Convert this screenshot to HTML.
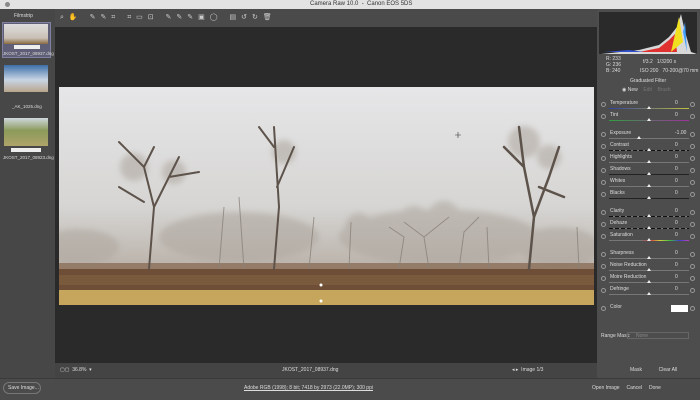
<!DOCTYPE html><html><head><style>
*{margin:0;padding:0;box-sizing:border-box}
body{width:700px;height:400px;overflow:hidden;background:#4b4b4b;font-family:"Liberation Sans",sans-serif;position:relative;color:#ddd}
.a{position:absolute}
.t{font-size:5px;color:#ddd;white-space:nowrap}
.row{position:absolute;left:597px;width:103px;height:12px}
.row .c{position:absolute;left:4px;top:2px;width:5px;height:5px;border:1px solid #999;border-radius:50%}
.row .c2{left:93px}
.row .l{position:absolute;left:13px;top:0;font-size:5px}
.row .v{position:absolute;left:78px;top:0;font-size:5px}
.row .s{position:absolute;left:12px;top:8px;width:80px;height:1px;background:#777}
.row .k{position:absolute;top:6px;width:0;height:0;border-left:2px solid transparent;border-right:2px solid transparent;border-bottom:3px solid #eee}
</style></head><body>
<div class="a" style="left:0;top:0;width:700px;height:9px;background:#e2e2e2"></div>
<div class="a" style="left:5px;top:2px;width:5px;height:5px;border-radius:50%;background:#888"></div>
<div class="a t" style="left:310px;top:1px;color:#333;font-size:6px">Camera Raw 10.0 &nbsp;-&nbsp; Canon EOS 5DS</div>
<div class="a" style="left:0;top:9px;width:55px;height:369px;background:#474747"></div>
<div class="a t" style="left:14px;top:13px">Filmstrip</div>
<div class="a" style="left:2px;top:22px;width:49px;height:36px;background:#5e5e76;border:1px solid #8080a0"></div>
<div class="a" style="left:4px;top:24px;width:44px;height:20px;background:linear-gradient(#ddd,#c9c0b5 70%,#8a6a40)"></div>
<div class="a" style="left:14px;top:45px;width:26px;height:4px;background:#eee"></div>
<div class="a t" style="left:3px;top:51px;font-size:4.5px">JKOST_2017_08937.dng</div>
<div class="a" style="left:4px;top:65px;width:44px;height:27px;background:linear-gradient(#3d6fa8,#c8d4e4 55%,#b8a58c)"></div>
<div class="a t" style="left:12px;top:104px;font-size:4.5px">_AK_1025.dng</div>
<div class="a" style="left:4px;top:118px;width:44px;height:28px;background:linear-gradient(#cfd7dd,#8b9a5a 45%,#b0a46a)"></div>
<div class="a" style="left:11px;top:148px;width:30px;height:4px;background:#eee"></div>
<div class="a t" style="left:3px;top:155px;font-size:4.5px">JKOST_2017_08923.dng</div>
<div class="a" style="left:55px;top:9px;width:542px;height:18px;background:#4a4a4a"></div>
<div class="a t" style="left:60px;top:13px;font-size:7px;letter-spacing:5px;color:#ccc">⌕✋ ✎✎⌗ ⌗▭⊡ ✎✎✎▣◯ ▤↺↻🗑</div>
<div class="a" style="left:55px;top:27px;width:542px;height:336px;background:#2a2a2a"></div>
<svg class="a" style="left:59px;top:87px" width="535" height="218" viewBox="0 0 535 218">
<defs><linearGradient id="g" x1="0" y1="0" x2="0" y2="1"><stop offset="0" stop-color="#e6e6e8"/><stop offset=".55" stop-color="#d6d5d3"/><stop offset=".8" stop-color="#bdb6ae"/></linearGradient>
<filter id="b"><feGaussianBlur stdDeviation="3"/></filter></defs>
<rect width="535" height="218" fill="url(#g)"/>
<g fill="#b0a9a1" opacity=".6" filter="url(#b)"><ellipse cx="180" cy="150" rx="80" ry="25"/><ellipse cx="380" cy="150" rx="100" ry="28"/><ellipse cx="20" cy="160" rx="40" ry="18"/><ellipse cx="500" cy="160" rx="40" ry="20"/><circle cx="75" cy="80" r="14"/><circle cx="115" cy="85" r="12"/><circle cx="225" cy="65" r="12"/><circle cx="465" cy="55" r="16"/><circle cx="490" cy="70" r="12"/><circle cx="355" cy="135" r="16"/><circle cx="385" cy="130" r="16"/><circle cx="300" cy="140" r="14"/></g>
<rect y="176" width="535" height="8" fill="#8a6e58" opacity=".8"/>
<rect y="182" width="535" height="21" fill="#6e4e36"/>
<rect y="188" width="535" height="10" fill="#7a5a3c"/>
<rect y="203" width="535" height="15" fill="#c6a65c"/>
<g stroke="#5d534b" fill="none" stroke-linecap="round">
<path d="M90 182 L95 120 L85 80 M95 120 L110 90 L120 70 M85 80 L60 55 M85 80 L95 60 M110 90 L140 85 M60 100 L85 115" stroke-width="2"/>
<path d="M215 182 L220 120 L215 40 M218 100 L235 60 M215 60 L200 40" stroke-width="2"/>
<path d="M470 182 L475 130 L465 80 L460 40 M475 130 L490 90 L500 60 M465 80 L445 60 M480 100 L505 110" stroke-width="2.5"/>
</g>
<g stroke="#8a827a" fill="none" stroke-width="1" opacity=".8">
<path d="M370 182 L365 150 L345 135 M365 150 L390 130 M340 182 L345 150 L330 140 M400 182 L405 145 L420 130"/>
<path d="M160 182 L165 120 M185 182 L180 110 M250 182 L255 130 M290 182 L292 135 M430 182 L428 140 M520 182 L518 140"/>
</g>
<circle cx="262" cy="198" r="1.5" fill="#fff"/><circle cx="262" cy="214" r="1.5" fill="#fff"/>
<path d="M396 48h6M399 45v6" stroke="#333" stroke-width=".6"/>
</svg>
<div class="a" style="left:55px;top:363px;width:542px;height:15px;background:#444"></div>
<div class="a t" style="left:60px;top:367px">▢▢ &nbsp;36.8% &nbsp;▾</div>
<div class="a t" style="left:282px;top:367px">JKOST_2017_08937.dng</div>
<div class="a t" style="left:512px;top:367px">◂ ▸ &nbsp;Image 1/3</div>
<div class="a" style="left:0;top:378px;width:700px;height:1px;background:#3a3a3a"></div>
<div class="a" style="left:3px;top:382px;width:38px;height:12px;border:1px solid #777;border-radius:6px"></div>
<div class="a t" style="left:8px;top:385px">Save Image...</div>
<div class="a t" style="left:244px;top:385px;text-decoration:underline">Adobe RGB (1998); 8 bit; 7418 by 2973 (22.0MP); 300 ppi</div>
<div class="a t" style="left:592px;top:385px">Open Image &nbsp;&nbsp;&nbsp; Cancel &nbsp;&nbsp;&nbsp; Done</div>
<div class="a" style="left:597px;top:9px;width:103px;height:369px;background:#4d4d4d"></div>
<svg class="a" style="left:599px;top:12px" width="98" height="42"><rect width="98" height="42" fill="#2a2a2a"/>
<path d="M2 42 L40 38 L60 33 L70 25 L78 15 L82 2 L86 20 L92 40 L98 42Z" fill="#d8d8d8"/>
<path d="M40 40 L60 36 L70 28 L76 22 L78 40Z" fill="#e03030"/><path d="M72 40 L80 5 L84 30Z" fill="#f0e020"/><path d="M5 40 L30 38 L45 40Z" fill="#3050d0"/><path d="M84 20 L86 10 L88 40Z" fill="#40a0ff"/></svg>
<div class="a t" style="left:606px;top:56px;line-height:6px">R: 233<br>G: 236<br>B: 240</div>
<div class="a t" style="left:643px;top:59px">f/3.2 &nbsp;&nbsp;1/3200 s</div>
<div class="a t" style="left:640px;top:68px">ISO 200 &nbsp;&nbsp;70-200@70 mm</div>
<div class="a t" style="left:630px;top:78px">Graduated Filter</div>
<div class="a t" style="left:622px;top:87px">◉ New &nbsp;&nbsp;&nbsp;<span style="color:#777">Edit &nbsp;&nbsp; Brush</span></div>
<div class="row" style="top:100px"><div class="c"></div><div class="l">Temperature</div><div class="v">0</div><div class="s" style="background:linear-gradient(90deg,#3040a0,#c0c040)"></div><div class="k" style="left:50px"></div><div class="c c2"></div></div>
<div class="row" style="top:112px"><div class="c"></div><div class="l">Tint</div><div class="v">0</div><div class="s" style="background:linear-gradient(90deg,#30a040,#a030a0)"></div><div class="k" style="left:50px"></div><div class="c c2"></div></div>
<div class="row" style="top:130px"><div class="c"></div><div class="l">Exposure</div><div class="v">-1.00</div><div class="s"></div><div class="k" style="left:40px"></div><div class="c c2"></div></div>
<div class="row" style="top:142px"><div class="c"></div><div class="l">Contrast</div><div class="v">0</div><div class="s" style="background:repeating-linear-gradient(90deg,#111 0 4px,#777 4px 6px)"></div><div class="k" style="left:50px"></div><div class="c c2"></div></div>
<div class="row" style="top:154px"><div class="c"></div><div class="l">Highlights</div><div class="v">0</div><div class="s"></div><div class="k" style="left:50px"></div><div class="c c2"></div></div>
<div class="row" style="top:166px"><div class="c"></div><div class="l">Shadows</div><div class="v">0</div><div class="s" style="background:#222"></div><div class="k" style="left:50px"></div><div class="c c2"></div></div>
<div class="row" style="top:178px"><div class="c"></div><div class="l">Whites</div><div class="v">0</div><div class="s"></div><div class="k" style="left:50px"></div><div class="c c2"></div></div>
<div class="row" style="top:190px"><div class="c"></div><div class="l">Blacks</div><div class="v">0</div><div class="s" style="background:#222"></div><div class="k" style="left:50px"></div><div class="c c2"></div></div>
<div class="row" style="top:208px"><div class="c"></div><div class="l">Clarity</div><div class="v">0</div><div class="s" style="background:repeating-linear-gradient(90deg,#111 0 4px,#777 4px 6px)"></div><div class="k" style="left:50px"></div><div class="c c2"></div></div>
<div class="row" style="top:220px"><div class="c"></div><div class="l">Dehaze</div><div class="v">0</div><div class="s" style="background:repeating-linear-gradient(90deg,#111 0 4px,#777 4px 6px)"></div><div class="k" style="left:50px"></div><div class="c c2"></div></div>
<div class="row" style="top:232px"><div class="c"></div><div class="l">Saturation</div><div class="v">0</div><div class="s" style="background:linear-gradient(90deg,#777 40%,#d04040,#d0d040,#40c040,#4040d0,#c040c0)"></div><div class="k" style="left:50px"></div><div class="c c2"></div></div>
<div class="row" style="top:250px"><div class="c"></div><div class="l">Sharpness</div><div class="v">0</div><div class="s"></div><div class="k" style="left:50px"></div><div class="c c2"></div></div>
<div class="row" style="top:262px"><div class="c"></div><div class="l">Noise Reduction</div><div class="v">0</div><div class="s"></div><div class="k" style="left:50px"></div><div class="c c2"></div></div>
<div class="row" style="top:274px"><div class="c"></div><div class="l">Moire Reduction</div><div class="v">0</div><div class="s"></div><div class="k" style="left:50px"></div><div class="c c2"></div></div>
<div class="row" style="top:286px"><div class="c"></div><div class="l">Defringe</div><div class="v">0</div><div class="s"></div><div class="k" style="left:50px"></div><div class="c c2"></div></div>
<div class="row" style="top:304px"><div class="c"></div><div class="l">Color</div><div class="c c2"></div></div>
<div class="a" style="left:671px;top:305px;width:17px;height:7px;background:#fff"></div>
<div class="a t" style="left:601px;top:333px">Range Mask: &nbsp;&nbsp;&nbsp;<span style="color:#888">None</span></div>
<div class="a" style="left:627px;top:332px;width:62px;height:7px;border:1px solid #666"></div>
<div class="a t" style="left:630px;top:367px">Mask &nbsp;&nbsp;&nbsp;&nbsp;&nbsp;&nbsp;&nbsp;&nbsp;&nbsp;&nbsp; Clear All</div>
</body></html>
